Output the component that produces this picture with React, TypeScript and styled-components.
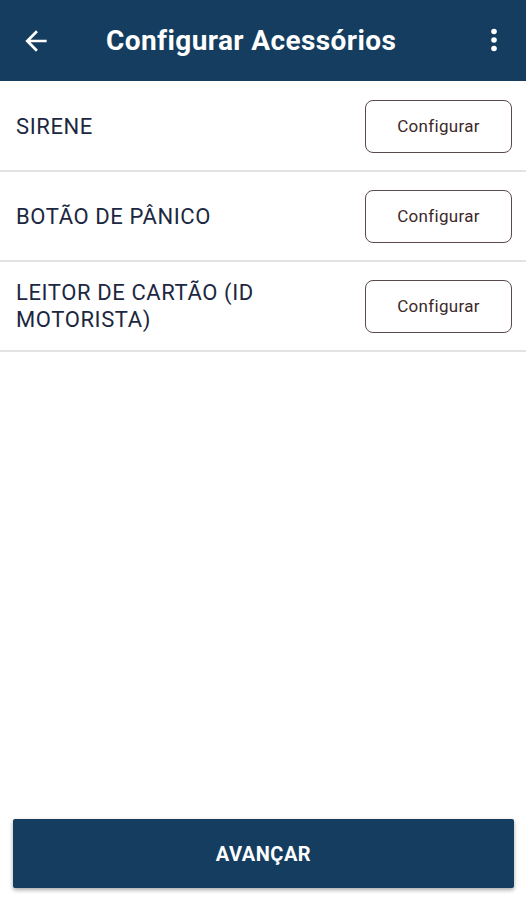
import React from "react";
import styled, { createGlobalStyle } from "styled-components";

const GlobalStyle = createGlobalStyle`
  html, body {
    margin: 0;
    padding: 0;
    background: #fff;
    font-family: Roboto, "Noto Sans", Arial, sans-serif;
  }
  #root {
    height: 900px;
  }
`;

const Screen = styled.div`
  display: flex;
  flex-direction: column;
  height: 900px;
  width: 526px;
  background: #fff;
`;

const AppBar = styled.header`
  height: 81px;
  background: #143d5f;
  display: flex;
  align-items: center;
  padding: 0 27px 0 20px;
  box-sizing: border-box;
`;

const IconButton = styled.button`
  background: none;
  border: 0;
  padding: 0;
  display: flex;
  align-items: center;
  justify-content: center;
  color: #fff;
  cursor: pointer;
`;

const Title = styled.h1`
  flex: 1;
  margin: 0 0 0 54px;
  color: #fff;
  font-size: 28px;
  font-weight: 700;
  letter-spacing: 0.4px;
`;

const List = styled.div`
  flex: 1;
  display: flex;
  flex-direction: column;
  padding-top: 1px;
`;

const Row = styled.div`
  display: flex;
  align-items: center;
  justify-content: space-between;
  height: 88px;
  padding: 0 14px 0 16px;
  border-bottom: 2px solid #e3e3e3;
`;

const Label = styled.span`
  color: #1c2741;
  font-size: 22px;
  line-height: 27px;
  max-width: 300px;
  letter-spacing: 0.6px;
`;

const OutlineButton = styled.button`
  width: 147px;
  height: 53px;
  border: 1.5px solid #5b4a4a;
  border-radius: 8px;
  background: #fff;
  color: #3d2727;
  font-family: Roboto, Arial, sans-serif;
  font-size: 17px;
  letter-spacing: 0.3px;
  cursor: pointer;
`;

const Footer = styled.div`
  padding: 0 12px 12px 13px;
`;

const PrimaryButton = styled.button`
  width: 100%;
  height: 69px;
  border: 0;
  border-radius: 2px;
  background: #143d5f;
  color: #fff;
  font-family: Roboto, Arial, sans-serif;
  font-size: 20px;
  font-weight: 700;
  letter-spacing: 0.5px;
  box-shadow: 0 2px 4px rgba(0, 0, 0, 0.35);
  cursor: pointer;
`;

const items = ["SIRENE", "BOTÃO DE PÂNICO", "LEITOR DE CARTÃO (ID MOTORISTA)"];

export default function App() {
  return (
    <>
      <GlobalStyle />
      <Screen>
        <AppBar>
          <IconButton aria-label="Voltar">
            <svg width="32" height="32" viewBox="0 0 24 24">
              <path
                d="M20 11H7.83l5.59-5.59L12 4l-8 8 8 8 1.41-1.41L7.83 13H20v-2z"
                fill="#fff"
              />
            </svg>
          </IconButton>
          <Title>Configurar Acessórios</Title>
          <IconButton aria-label="Mais opções">
            <svg width="10" height="26" viewBox="0 0 10 26">
              <circle cx="5" cy="3.5" r="2.8" fill="#fff" />
              <circle cx="5" cy="12" r="2.8" fill="#fff" />
              <circle cx="5" cy="20.5" r="2.8" fill="#fff" />
            </svg>
          </IconButton>
        </AppBar>
        <List>
          {items.map((item) => (
            <Row key={item}>
              <Label>{item}</Label>
              <OutlineButton>Configurar</OutlineButton>
            </Row>
          ))}
        </List>
        <Footer>
          <PrimaryButton>AVANÇAR</PrimaryButton>
        </Footer>
      </Screen>
    </>
  );
}
